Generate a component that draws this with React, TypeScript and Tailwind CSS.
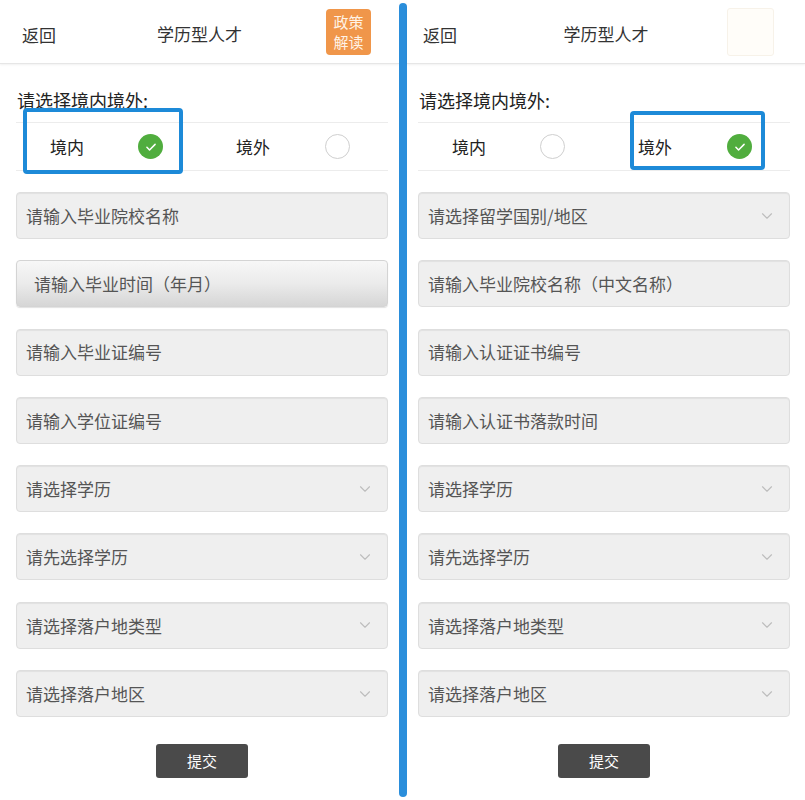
import { ChevronDown } from 'lucide-react';

type Field = { label: string; select?: boolean; raised?: boolean };

const domestic: Field[] = [
  { label: '请输入毕业院校名称' },
  { label: '请输入毕业时间（年月）', raised: true },
  { label: '请输入毕业证编号' },
  { label: '请输入学位证编号' },
  { label: '请选择学历', select: true },
  { label: '请先选择学历', select: true },
  { label: '请选择落户地类型', select: true },
  { label: '请选择落户地区', select: true },
];

const overseas: Field[] = [
  { label: '请选择留学国别/地区', select: true },
  { label: '请输入毕业院校名称（中文名称）' },
  { label: '请输入认证证书编号' },
  { label: '请输入认证书落款时间' },
  { label: '请选择学历', select: true },
  { label: '请先选择学历', select: true },
  { label: '请选择落户地类型', select: true },
  { label: '请选择落户地区', select: true },
];

function Radio({ checked }: { checked: boolean }) {
  if (checked) {
    return (
      <span className="flex h-[25px] w-[25px] items-center justify-center rounded-full bg-[#50ad3e]">
        <svg viewBox="0 0 24 24" className="h-[14px] w-[14px]" fill="none" stroke="white" strokeWidth="2.6" strokeLinecap="round" strokeLinejoin="round">
          <path d="M5 12.5l4.5 4.5L19 7.5" />
        </svg>
      </span>
    );
  }
  return <span className="block h-[25px] w-[25px] rounded-full border border-[#cfcfcf] bg-white" />;
}

function Input({ f }: { f: Field }) {
  if (f.raised) {
    return (
      <div className="flex h-[47px] items-center rounded-[4px] border border-[#d4d4d4] bg-gradient-to-b from-[#f7f7f7] via-[#ebebeb] to-[#d6d6d6] pl-[17px] text-[17px] text-[#555] shadow-[0_1px_1px_rgba(0,0,0,0.12)]">
        {f.label}
      </div>
    );
  }
  return (
    <div className="flex h-[47px] items-center justify-between rounded-[4px] border border-[#dedede] bg-[#efefef] pl-[9px] pr-[13px] text-[17px] text-[#555] shadow-[inset_0_1px_1px_rgba(0,0,0,0.06)]">
      <span>{f.label}</span>
      {f.select && <ChevronDown className="h-[18px] w-[18px] text-[#bdbdbd]" strokeWidth={1.5} />}
    </div>
  );
}

function Panel({ abroad }: { abroad: boolean }) {
  const fields = abroad ? overseas : domestic;
  return (
    <div className={abroad ? 'flex w-[398px] flex-col' : 'flex w-[399px] flex-col'}>
      <header className="grid h-[64px] grid-cols-[1fr_auto_1fr] items-center border-b border-[#e6e6e6] shadow-[0_1px_2px_rgba(0,0,0,0.06)] text-[17px] text-[#333]">
        <span className={abroad ? 'mt-[6px] pl-[16px]' : 'mt-[6px] pl-[22px]'}>返回</span>
        <span className="mt-[4px]">学历型人才</span>
        <div className={abroad ? 'flex justify-end pr-[31px]' : 'flex justify-end pr-[28px]'}>
          {abroad ? (
            <span className="block h-[48px] w-[47px] rounded-[3px] border border-[#f7f2e9] bg-[#fffdf9]" />
          ) : (
            <span className="flex h-[46px] w-[45px] flex-col items-center justify-center rounded-[4px] bg-[#f0964a] text-[15px] leading-[20px] text-[#fff3e6]">
              <span>政策</span>
              <span>解读</span>
            </span>
          )}
        </div>
      </header>

      <div className={abroad ? 'flex flex-col pl-[11px] pr-[15px]' : 'flex flex-col pl-[16px] pr-[11px]'}>
        <div className="mt-[23px] pl-[1px] text-[18px] leading-[26px] text-[#222]">请选择境内境外:</div>

        <div className="relative mt-[9px] flex h-[49px] border-y border-[#ececec] text-[17px] text-[#222]">
          <div className="flex flex-1 items-center pl-[34px]">
            <span className="w-[88px]">境内</span>
            <Radio checked={!abroad} />
          </div>
          <div className="flex flex-1 items-center pl-[34px]">
            <span className="w-[89px]">境外</span>
            <Radio checked={abroad} />
          </div>
          {abroad ? (
            <div className="absolute left-[212px] top-[-12px] h-[59px] w-[135px] rounded-[4px] border-[4px] border-[#1d8ad8]" />
          ) : (
            <div className="absolute left-[7px] top-[-15px] h-[66px] w-[160px] rounded-[4px] border-[4px] border-[#1d8ad8]" />
          )}
        </div>

        <div className="mt-[21px] flex flex-col gap-[21.3px]">
          {fields.map((f) => (
            <Input key={f.label} f={f} />
          ))}
        </div>

        <div className="mt-[27px] flex justify-center">
          <button className="h-[34px] w-[92px] rounded-[3px] bg-[#4a4a4a] text-[15px] text-white">提交</button>
        </div>
      </div>
    </div>
  );
}

export default function App() {
  return (
    <div className="flex h-[800px] w-[805px] overflow-hidden bg-white font-['Noto_Sans_CJK_SC','Noto_Sans',sans-serif]">
      <Panel abroad={false} />
      <div className="my-[3px] w-[8px] rounded-full bg-[#2a8edb]" />
      <Panel abroad={true} />
    </div>
  );
}
